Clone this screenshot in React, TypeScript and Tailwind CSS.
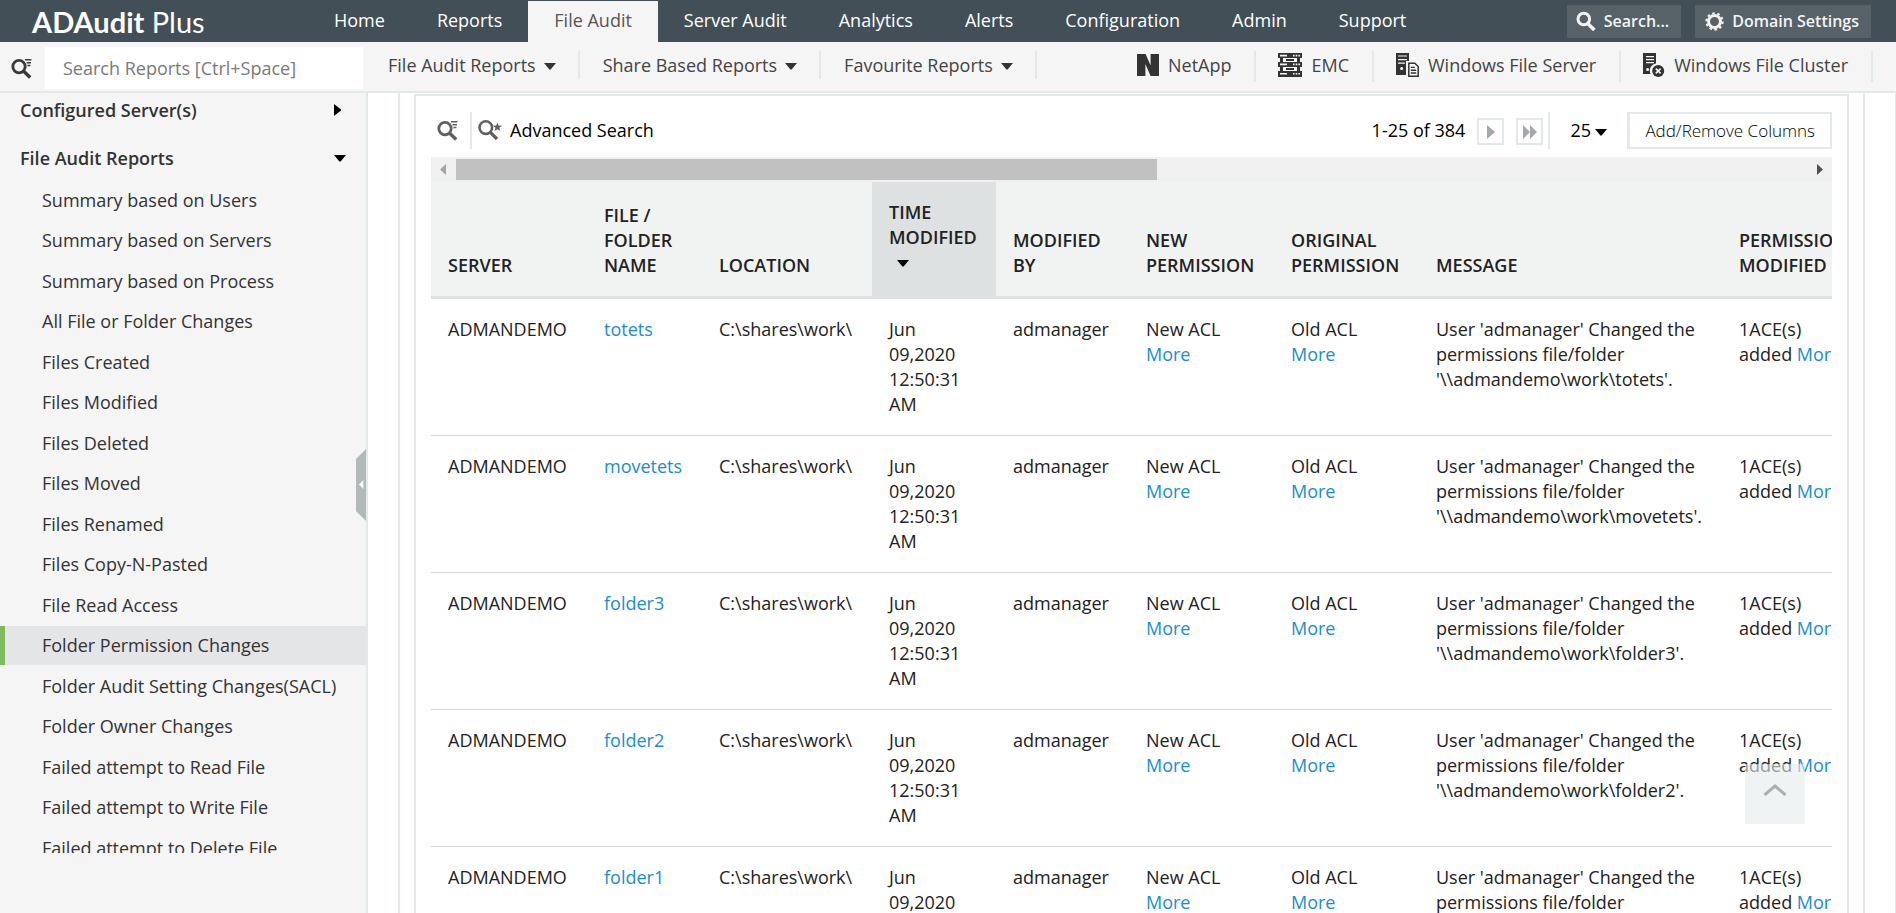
import React, { useState } from "react";

const tabs = ["Home", "Reports", "File Audit", "Server Audit", "Analytics", "Alerts", "Configuration", "Admin", "Support"];

const menus = ["File Audit Reports", "Share Based Reports", "Favourite Reports"];

const reports = [
  "Summary based on Users",
  "Summary based on Servers",
  "Summary based on Process",
  "All File or Folder Changes",
  "Files Created",
  "Files Modified",
  "Files Deleted",
  "Files Moved",
  "Files Renamed",
  "Files Copy-N-Pasted",
  "File Read Access",
  "Folder Permission Changes",
  "Folder Audit Setting Changes(SACL)",
  "Folder Owner Changes",
  "Failed attempt to Read File",
  "Failed attempt to Write File",
  "Failed attempt to Delete File",
];

const files = ["totets", "movetets", "folder3", "folder2", "folder1"];

const CaretDown = ({ className = "" }: { className?: string }) => (
  <svg className={`w-3 h-[7px] shrink-0 ${className}`} viewBox="0 0 12 7" fill="currentColor" aria-hidden="true">
    <path d="M0 0h12L6.6 6.6h-1.2z" />
  </svg>
);

const SearchListIcon = ({ className = "" }: { className?: string }) => (
  <svg className={`w-[21px] h-[21px] shrink-0 ${className}`} viewBox="0 0 21 21" fill="none" stroke="currentColor" aria-hidden="true">
    <circle cx="8" cy="8.6" r="6.2" strokeWidth="2.8" />
    <path d="M12.4 13l6.8 6.4" strokeWidth="3.4" />
    <path d="M14 1.8h6.4M15.6 4.7h4.4M16.4 7.6h3" strokeWidth="1.5" />
  </svg>
);

const SearchStarIcon = () => (
  <svg className="w-6 h-[21px] shrink-0" viewBox="0 0 24 21" fill="none" stroke="currentColor" aria-hidden="true">
    <circle cx="7.8" cy="7.6" r="6.3" strokeWidth="2.6" />
    <path d="M12.4 12.4l6.6 6.6" strokeWidth="3.2" />
    <path d="M19.4 2.4l1.2 3.2 3.4.2-2.7 2 1 3.3-2.9-1.9-2.9 1.9 1-3.3-2.7-2 3.4-.2z" fill="currentColor" stroke="none" />
  </svg>
);

const SearchIcon = () => (
  <svg className="w-5 h-5 shrink-0" viewBox="0 0 20 20" fill="none" stroke="currentColor" aria-hidden="true">
    <circle cx="7.8" cy="8" r="5.8" strokeWidth="3" />
    <path d="M12.2 13l6.2 6" strokeWidth="3.6" />
  </svg>
);

const GearIcon = () => (
  <svg className="w-[19px] h-[19px] shrink-0" viewBox="0 0 19 19" fill="none" stroke="currentColor" aria-hidden="true">
    <circle cx="9.5" cy="9.5" r="6" strokeWidth="3" />
    <circle cx="9.5" cy="9.5" r="8.2" strokeWidth="2" strokeDasharray="2.6 2.552" />
  </svg>
);

const NetAppIcon = () => (
  <svg className="w-[22px] h-[22px] shrink-0" viewBox="0 0 22 22" fill="currentColor" aria-hidden="true">
    <path d="M0 0h8.6l5 11.6V0H22v22h-8.4l-5.2-12v12H0z" />
  </svg>
);

const EmcIcon = () => (
  <svg className="w-6 h-6 shrink-0" viewBox="0 0 24 24" aria-hidden="true">
    <g fill="currentColor">
      <path d="M0 0h24v5H0zM0 9h24v5H0zM0 18h24v6H0z" />
      <path d="M2 5h3v4H2zM19 5h3v4h-3zM2 14h3v4H2zM19 14h3v4h-3z" />
      <path d="M8 6h8v2H8zM8 15h8v2H8z" />
    </g>
    <path d="M2 1.8h7v1.6H2zM2 10.6h7v1.6H2zM2 20h7v1.6H2z" fill="#f5f5f5" />
    <path d="M15 2.6h7M15 11.4h7M15 20.8h7" stroke="#f5f5f5" strokeWidth="1.6" strokeDasharray="1.6 1.1" />
  </svg>
);

const FileServerIcon = () => (
  <svg className="w-[23px] h-6 shrink-0" viewBox="0 0 23 24" aria-hidden="true">
    <path d="M0 0h13v8h-3v14H0z" fill="currentColor" />
    <path d="M2 3h9M2 6.6h9M2 10.2h7" stroke="#f5f5f5" strokeWidth="1.2" />
    <circle cx="5.6" cy="15.6" r="1.5" fill="#f5f5f5" />
    <path d="M12.8 10.3h6l3.4 3.2v9.7h-9.4z" fill="#f5f5f5" stroke="currentColor" strokeWidth="1.5" />
    <path d="M14.8 14.4h4M14.8 17.2h5.4M14.8 20h5.4" stroke="currentColor" strokeWidth="1.4" />
  </svg>
);

const FileClusterIcon = () => (
  <svg className="w-[22px] h-6 shrink-0" viewBox="0 0 22 24" aria-hidden="true">
    <path d="M0 0h13v10.4A7.4 7.4 0 0 0 7.6 21H0z" fill="currentColor" />
    <path d="M3 3.6h8M3 6.6h8M3 9.6h8" stroke="#f5f5f5" strokeWidth="1.2" />
    <circle cx="4.6" cy="16.4" r="1.5" fill="#f5f5f5" />
    <circle cx="15.2" cy="18" r="6" fill="currentColor" />
    <path d="M12.8 15.6l4.8 4.8M17.6 15.6l-4.8 4.8" stroke="#f5f5f5" strokeWidth="1.6" />
  </svg>
);

const sources = [
  { label: "NetApp", icon: <NetAppIcon /> },
  { label: "EMC", icon: <EmcIcon /> },
  { label: "Windows File Server", icon: <FileServerIcon /> },
  { label: "Windows File Cluster", icon: <FileClusterIcon /> },
];

const Header = () => (
  <header className="flex items-center h-[42px] shrink-0 bg-[#434f57] text-white">
    <h1 className="w-[308px] pl-8 pt-[2px] font-['Lato'] text-[29px] leading-[40px] shrink-0 whitespace-nowrap">
      <span className="font-bold">ADAudit</span> Plus
    </h1>
    <nav className="flex self-stretch pt-px">
      {tabs.map((tab) => (
        <a
          key={tab}
          href="#"
          className={`px-[26px] leading-[38px] whitespace-nowrap ${tab === "File Audit" ? "bg-[#f5f5f5] text-[#555]" : ""}`}
        >
          {tab}
        </a>
      ))}
    </nav>
    <div className="flex gap-[14px] ml-auto mr-[25px] text-[16px] font-semibold text-[#f2f4f4]">
      <button className="flex items-center gap-2 h-[33px] pl-[9px] pr-3 bg-[#566168] whitespace-nowrap">
        <SearchIcon />
        Search...
      </button>
      <button className="flex items-center gap-2 h-[33px] pl-[10px] pr-3 bg-[#566168] whitespace-nowrap">
        <GearIcon />
        Domain Settings
      </button>
    </div>
  </header>
);

const SubHeader = () => (
  <div className="flex h-[51px] shrink-0 bg-[#f5f5f5] border-b-2 border-[#e3e8e8] text-[#333]">
    <label htmlFor="report-search" className="flex items-center w-[45px] pl-[11px] pt-1">
      <SearchListIcon className="text-[#3a3a3a]" />
    </label>
    <input
      id="report-search"
      type="text"
      placeholder="Search Reports [Ctrl+Space]"
      aria-label="Search Reports"
      className="w-[318px] h-[42px] mt-[5px] pl-[18px] bg-white placeholder:text-[#7a7a7a] outline-none"
    />
    <div className="flex h-7 mt-[9px]">
      {menus.map((menu) => (
        <button key={menu} className="flex items-center gap-2 pl-[23px] pr-[22px] first:pl-[25px] border-r-2 border-[#e3e8e8] text-[#444] whitespace-nowrap">
          {menu}
          <CaretDown className="mt-[3px] text-[#333]" />
        </button>
      ))}
    </div>
    <div className="flex h-[31px] mt-[9px] ml-auto mr-[23px]">
      {sources.map((source) => (
        <a key={source.label} href="#" className="flex items-center gap-[9px] pl-[22px] pr-[23px] pb-[3px] border-r-2 border-[#e3e8e8] whitespace-nowrap">
          {source.icon}
          <span className="text-[#444]">{source.label}</span>
        </a>
      ))}
    </div>
  </div>
);

const Sidebar = () => {
  const [selected, setSelected] = useState<string>("Folder Permission Changes");

  return (
    <aside className="relative w-[368px] shrink-0 pb-[60px] bg-[#f5f5f5] border-r-2 border-[#e3e8e8] text-[#333]">
      <div className="h-full overflow-hidden">
        <button className="flex items-center justify-between w-full h-[34px] pl-5 pr-[25px] font-semibold">
          Configured Server(s)
          <svg className="w-[7px] h-3" viewBox="0 0 7 12" fill="#000" aria-hidden="true">
            <path d="M0 0v12l7-5.4v-1.2z" />
          </svg>
        </button>
        <button className="flex items-center justify-between w-full h-[46px] mt-2 pl-5 pr-5 font-semibold">
          File Audit Reports
          <CaretDown className="text-black" />
        </button>
        <ul>
          {reports.map((report) => (
            <li key={report} className="odd:h-[40px] even:h-[41px]">
              <a
                href="#"
                onClick={() => setSelected(report)}
                className={`block h-[39px] pl-[37px] border-l-[5px] leading-[39px] whitespace-nowrap ${
                  report === selected ? "border-[#7fbb5e] bg-[#e3e5e6]" : "border-transparent"
                }`}
              >
                {report}
              </a>
            </li>
          ))}
        </ul>
      </div>
      <button aria-label="Collapse sidebar" className="absolute right-0 top-[356px]">
        <svg className="block w-[10px] h-[72px]" viewBox="0 0 10 72" aria-hidden="true">
          <path d="M10 0v72L0 62V10z" fill="#b3b9bb" />
          <path d="M7.4 31v9L3 35.5z" fill="#fff" />
        </svg>
      </button>
    </aside>
  );
};

const Toolbar = () => (
  <div className="flex items-center h-[37px] text-black">
    <button aria-label="Search" className="flex items-center self-stretch pl-[6px] pr-3 border-r-2 border-[#e3e8e8] text-[#606060]">
      <SearchListIcon />
    </button>
    <a href="#" className="flex items-center gap-2 pl-[6px]">
      <span className="text-[#606060]"><SearchStarIcon /></span>
      Advanced Search
    </a>
    <span className="ml-auto mr-3">1-25 of 384</span>
    <div className="flex items-center gap-3 self-stretch pt-[2px] pr-[5px] border-r-2 border-[#e3e8e8]">
      <button aria-label="Next page" className="flex items-center justify-center w-[27px] h-[27px] border-2 border-[#e3e8e8]">
        <svg className="w-2 h-[14px]" viewBox="0 0 8 14" fill="#a3a9ac" aria-hidden="true">
          <path d="M0 0v14l8-7z" />
        </svg>
      </button>
      <button aria-label="Last page" className="flex items-center justify-center w-[27px] h-[27px] border-2 border-[#e3e8e8]">
        <svg className="w-[14px] h-[14px]" viewBox="0 0 14 14" fill="#a3a9ac" aria-hidden="true">
          <path d="M0 0v14l7-7zM7 0v14l7-7z" />
        </svg>
      </button>
    </div>
    <div className="flex items-center ml-5">
      <select aria-label="Rows per page" className="appearance-none w-[25px] bg-transparent outline-none">
        <option>25</option>
        <option>50</option>
      </select>
      <CaretDown className="mt-1" />
    </div>
    <button className="h-[37px] ml-5 px-[15px] border-2 border-l-[3px] border-[#e3e8e8] text-[17px] font-light leading-[31px] whitespace-nowrap">
      Add/Remove Columns
    </button>
  </div>
);

const Scrollbar = () => (
  <div className="flex items-center h-[25px] mt-2 bg-[#f0f0f0]">
    <svg className="w-[25px] h-[11px] shrink-0" viewBox="0 0 25 11" fill="#a3a3a3" aria-hidden="true">
      <path d="M15 0v11L9 5.5z" />
    </svg>
    <div className="flex-1">
      <div className="w-[52%] h-[21px] bg-[#c1c1c1]" />
    </div>
    <svg className="w-[28px] h-[11px] shrink-0" viewBox="0 0 28 11" fill="#505050" aria-hidden="true">
      <path d="M13 0v11l6-5.5z" />
    </svg>
  </div>
);

const ReportTable = () => (
  <div className="overflow-hidden">
    <table className="table-fixed w-[1461px] border-collapse text-left leading-[25px] text-[#222]">
      <colgroup>
        <col className="w-[156px]" />
        <col className="w-[115px]" />
        <col className="w-[170px]" />
        <col className="w-[124px]" />
        <col className="w-[133px]" />
        <col className="w-[145px]" />
        <col className="w-[145px]" />
        <col className="w-[303px]" />
        <col className="w-[170px]" />
      </colgroup>
      <thead>
        <tr className="h-[115px] bg-[#f1f3f3] border-b-[3px] border-[#dde1e2] align-bottom [&>th]:pl-[17px] [&>th]:pb-[18px] [&>th]:font-semibold">
          <th>SERVER</th>
          <th>FILE /<br />FOLDER<br />NAME</th>
          <th>LOCATION</th>
          <th className="bg-[#dde1e2]">
            TIME<br />MODIFIED
            <span className="flex h-7 pl-2 pt-[10px] text-black"><CaretDown /></span>
          </th>
          <th>MODIFIED<br />BY</th>
          <th>NEW<br />PERMISSION</th>
          <th>ORIGINAL<br />PERMISSION</th>
          <th>MESSAGE</th>
          <th>PERMISSION<br />MODIFIED</th>
        </tr>
      </thead>
      <tbody>
        {files.map((file) => (
          <tr key={file} className="border-b border-[#d6d9da] align-top [&>td]:pl-[17px] [&>td]:py-[18px] [&_a]:text-[#1a8dcf]">
            <td>ADMANDEMO</td>
            <td><a href="#">{file}</a></td>
            <td>C:\shares\work\</td>
            <td>Jun<br />09,2020<br />12:50:31<br />AM</td>
            <td>admanager</td>
            <td>New ACL<br /><a href="#">More</a></td>
            <td>Old ACL<br /><a href="#">More</a></td>
            <td>User 'admanager' Changed the<br />permissions file/folder<br />'\\admandemo\work\{file}'.</td>
            <td>1ACE(s)<br />added <a href="#">More</a></td>
          </tr>
        ))}
      </tbody>
    </table>
  </div>
);

const App = () => {
  return (
    <div className="flex flex-col h-screen overflow-hidden bg-white font-['Open_Sans',sans-serif] text-[18px]">
      <Header />
      <SubHeader />
      <div className="flex flex-1 min-h-0">
        <Sidebar />
        <main className="relative flex-1 min-w-0 pl-[30px] pr-[30px] border-r border-[#e8e8e8] overflow-hidden">
          <div className="px-[14px] pt-px border-x-2 border-[#e3e8e8]">
            <section className="pt-4 px-[15px] border-2 border-[#e3e8e8]">
              <Toolbar />
              <Scrollbar />
              <ReportTable />
            </section>
          </div>
          <button aria-label="Back to top" className="absolute right-[90px] bottom-[89px] flex items-center justify-center w-[60px] h-[60px] pb-2 bg-[#e6ebeb]/60">
            <svg className="w-6 h-3" viewBox="0 0 24 12" fill="none" stroke="#adb0b0" strokeWidth="3" aria-hidden="true">
              <path d="M1.5 11L12 2l10.5 9" />
            </svg>
          </button>
        </main>
      </div>
    </div>
  );
};

export default App;
